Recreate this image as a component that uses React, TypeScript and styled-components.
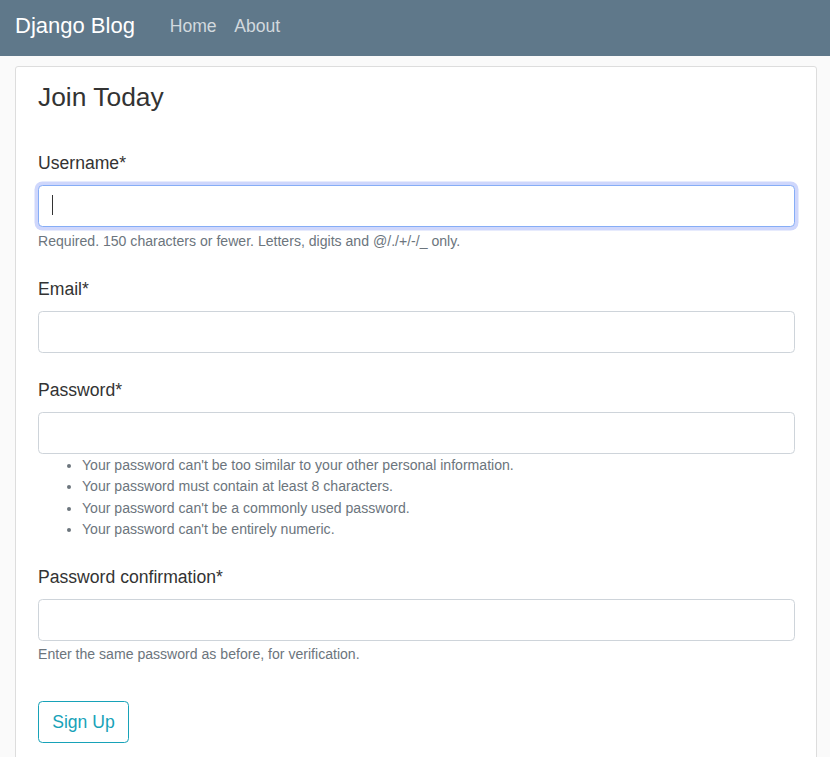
import styled, { createGlobalStyle } from "styled-components";

const GlobalStyle = createGlobalStyle`
    html, body {
        margin: 0;
        padding: 0;
        background-color: #fafafa;
        font-family: "Liberation Sans", Arial, sans-serif;
        color: #333333;
    }
    * {
        box-sizing: border-box;
    }
`;

const Page = styled.div`
    height: 100vh;
    overflow: hidden;
`;

const Navbar = styled.header`
    display: flex;
    align-items: center;
    height: 56px;
    padding: 0 15px 4px;
    background-color: #5f788a;
`;

const Brand = styled.a`
    font-size: 22px;
    color: #ffffff;
    text-decoration: none;
    margin-right: 26px;
`;

const NavLink = styled.a`
    font-size: 17.6px;
    padding: 0 8.8px;
    color: #d2d9de;
    text-decoration: none;
`;

const Main = styled.main`
    padding: 10px 0 0 15px;
`;

const Card = styled.section`
    width: 802px;
    background-color: #ffffff;
    border: 1px solid #dddddd;
    border-radius: 3px;
    padding: 11px 21px 11px 22px;
`;

const Legend = styled.h1`
    margin: 0 0 32.7px;
    font-size: 26.4px;
    font-weight: 400;
    line-height: 39.6px;
    color: #333333;
`;

const Group = styled.div`
    margin-bottom: 24px;
`;

const Label = styled.label`
    display: block;
    font-size: 17.6px;
    line-height: 26.4px;
    margin-bottom: 8.8px;
    color: #333333;
`;

const InputWrap = styled.div`
    position: relative;
`;

const Input = styled.input<{ $focused?: boolean }>`
    display: block;
    width: 100%;
    height: 41.8px;
    padding: 6.6px 13.2px;
    font-family: inherit;
    font-size: 17.6px;
    color: #495057;
    background-color: #ffffff;
    border: 1px solid ${(p) => (p.$focused ? "#86adf6" : "#ced4da")};
    border-radius: 4.4px;
    outline: none;
    box-shadow: ${(p) => (p.$focused ? "0 0 0 3.5px #cfd7fc" : "none")};
`;

const Caret = styled.span`
    position: absolute;
    left: 14px;
    top: 10px;
    width: 1px;
    height: 20px;
    background-color: #333333;
`;

const Help = styled.small`
    display: block;
    margin-top: 3.5px;
    font-size: 14.08px;
    line-height: 21.1px;
    color: #6c757d;
`;

const HelpList = styled.ul`
    margin: 1.5px 0 1px;
    padding-left: 44px;
    font-size: 14.08px;
    line-height: 21.1px;
    color: #6c757d;
`;

const ButtonRow = styled.div`
    margin-top: 35.6px;
    margin-bottom: 17.6px;
`;

const OutlineButton = styled.button`
    font-family: inherit;
    font-size: 17.6px;
    line-height: 26.4px;
    padding: 6.6px 13.2px;
    color: #17a2b8;
    background: transparent;
    border: 1px solid #17a2b8;
    border-radius: 4.4px;
    cursor: pointer;
`;

const passwordRules = [
    "Your password can't be too similar to your other personal information.",
    "Your password must contain at least 8 characters.",
    "Your password can't be a commonly used password.",
    "Your password can't be entirely numeric.",
];

export default function App() {
    return (
        <Page>
            <GlobalStyle />
            <Navbar>
                <Brand href="#">Django Blog</Brand>
                <NavLink href="#">Home</NavLink>
                <NavLink href="#">About</NavLink>
            </Navbar>
            <Main>
                <Card>
                    <Legend>Join Today</Legend>
                    <Group>
                        <Label htmlFor="id_username">Username*</Label>
                        <InputWrap>
                            <Input id="id_username" type="text" $focused />
                            <Caret />
                        </InputWrap>
                        <Help>Required. 150 characters or fewer. Letters, digits and @/./+/-/_ only.</Help>
                    </Group>
                    <Group>
                        <Label htmlFor="id_email">Email*</Label>
                        <Input id="id_email" type="email" />
                    </Group>
                    <Group>
                        <Label htmlFor="id_password1">Password*</Label>
                        <Input id="id_password1" type="password" />
                        <HelpList>
                            {passwordRules.map((rule) => (
                                <li key={rule}>{rule}</li>
                            ))}
                        </HelpList>
                    </Group>
                    <Group>
                        <Label htmlFor="id_password2">Password confirmation*</Label>
                        <Input id="id_password2" type="password" />
                        <Help>Enter the same password as before, for verification.</Help>
                    </Group>
                    <ButtonRow>
                        <OutlineButton type="submit">Sign Up</OutlineButton>
                    </ButtonRow>
                </Card>
            </Main>
        </Page>
    );
}
